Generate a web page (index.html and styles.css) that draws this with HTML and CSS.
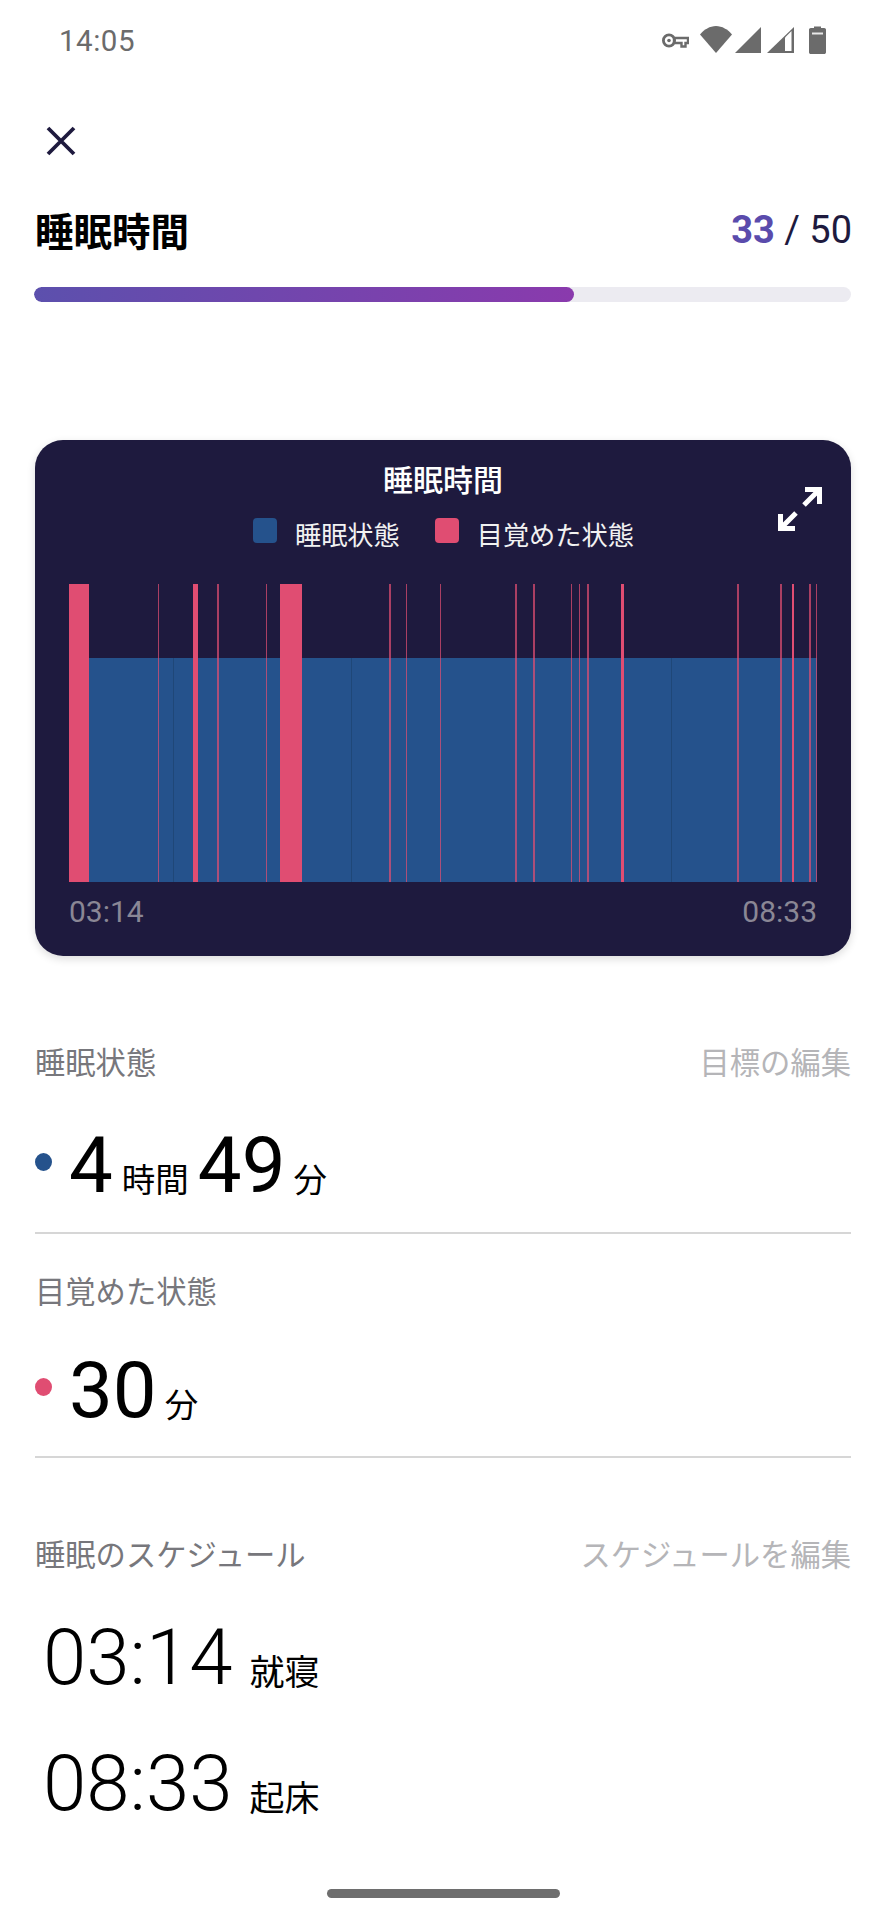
FILE: index.html
```html
<!DOCTYPE html>
<html lang="ja">
<head>
<meta charset="utf-8">
<title>睡眠時間</title>
<link rel="stylesheet" href="styles.css">
</head>
<body>
<div class="screen">
  <div class="statusbar">
    <span class="clock">14:05</span>
    <div class="status-icons">
      <svg class="ic-key" viewBox="0 0 27 15"><circle cx="7" cy="7.500" r="5.600" fill="none" stroke="#6b6b6b" stroke-width="2.800"/><circle cx="7" cy="7.500" r="1.800" fill="#6b6b6b"/><path d="M12 5h14v5h-2.500v3.500h-4V10h-7.500z" fill="none" stroke="#6b6b6b" stroke-width="2.400"/></svg>
      <svg class="ic-wifi" viewBox="0 0 32 27"><path d="M0 8.500C4 3.500 10 0 16 0s12 3.500 16 8.500L16 27z" fill="#6b6b6b"/></svg>
      <svg class="ic-signal" viewBox="0 0 26 26"><path d="M0 26L26 0v26z" fill="#6b6b6b"/></svg>
      <svg class="ic-signal2" viewBox="0 0 27 26"><path d="M0 26L27 0v26z" fill="#6b6b6b"/><path d="M18 10.500l6.500-6.500V24H18z" fill="#fff"/></svg>
      <svg class="ic-batt" viewBox="0 0 17 28"><path d="M5 2V0.500h7V2h3.200c1 0 1.800.8 1.800 1.800v22.400c0 1-.8 1.800-1.800 1.800H1.800c-1 0-1.800-.8-1.800-1.800V3.800C0 2.800.8 2 1.800 2z" fill="#6b6b6b"/><path d="M3 6.500h11v2H3z" fill="#e8e8e8"/></svg>
    </div>
  </div>

  <div class="main">
    <svg class="close" viewBox="0 0 30 30"><path d="M2 2l26 26M28 2L2 28" fill="none" stroke="#1e1a3e" stroke-width="3.800"/></svg>

    <div class="title-row">
      <h1 class="title">睡眠時間</h1>
      <div class="score"><b class="score-val">33</b> / 50</div>
    </div>
    <div class="progress"><div class="progress-fill"></div></div>

    <section class="card">
      <h2 class="card-title">睡眠時間</h2>
      <svg class="expand" viewBox="0 0 44 44"><path d="M27 2.500h14.500V17M41 3L26 18M17 41.500H2.500V27M3 41l15-15" fill="none" stroke="#fff" stroke-width="5"/></svg>
      <div class="legend">
        <span class="swatch swatch-blue"></span><span class="legend-text">睡眠状態</span>
        <span class="swatch swatch-red"></span><span class="legend-text">目覚めた状態</span>
      </div>
      <svg class="chart" viewBox="0 0 748 298" shape-rendering="crispEdges">
        <rect x="20" y="74" width="728" height="224" fill="#25528c"/>
        <g fill="#1f4778">
          <rect x="104" y="74" width="1" height="224"/>
          <rect x="282" y="74" width="1" height="224"/>
          <rect x="602" y="74" width="1" height="224"/>
        </g>
        <g fill="#e04d72">
          <rect x="0" y="0" width="20" height="298"/>
          <rect x="124" y="0" width="5" height="298"/>
          <rect x="211" y="0" width="22" height="298"/>
          <rect x="552" y="0" width="3" height="298"/>
          <rect x="723" y="0" width="2" height="298"/>
        </g>
        <g fill="#e04d72" fill-opacity="0.72">
          <rect x="89" y="0" width="1" height="298"/>
          <rect x="148" y="0" width="2" height="298"/>
          <rect x="197" y="0" width="1" height="298"/>
          <rect x="320" y="0" width="2" height="298"/>
          <rect x="337" y="0" width="1" height="298"/>
          <rect x="371" y="0" width="1" height="298"/>
          <rect x="446" y="0" width="2" height="298"/>
          <rect x="464" y="0" width="2" height="298"/>
          <rect x="502" y="0" width="1" height="298"/>
          <rect x="510" y="0" width="1" height="298"/>
          <rect x="518" y="0" width="2" height="298"/>
          <rect x="668" y="0" width="2" height="298"/>
          <rect x="711" y="0" width="2" height="298"/>
          <rect x="740" y="0" width="2" height="298"/>
          <rect x="747" y="0" width="1" height="298"/>
        </g>
      </svg>
      <div class="axis"><span>03:14</span><span>08:33</span></div>
    </section>

    <div class="section-head sleep-head">
      <span class="section-label">睡眠状態</span>
      <span class="section-link">目標の編集</span>
    </div>
    <div class="value-row first-row">
      <span class="dot dot-blue"></span>
      <span class="num">4</span><span class="unit unit-a">時間</span><span class="num num-b">49</span><span class="unit unit-b">分</span>
    </div>
    <div class="divider divider-a"></div>

    <div class="section-head wake-head">
      <span class="section-label wake-label">目覚めた状態</span>
    </div>
    <div class="value-row second-row">
      <span class="dot dot-red"></span>
      <span class="num">30</span><span class="unit unit-b">分</span>
    </div>
    <div class="divider divider-b"></div>

    <div class="section-head sched-head">
      <span class="section-label">睡眠のスケジュール</span>
      <span class="section-link">スケジュールを編集</span>
    </div>
    <div class="time-row bed-row"><span class="time">03:14</span><span class="unit time-unit">就寝</span></div>
    <div class="time-row wake-row"><span class="time">08:33</span><span class="unit time-unit">起床</span></div>
  </div>

  <div class="home-bar"></div>
</div>
</body>
</html>
```

FILE: styles.css
```css
* { box-sizing: border-box; }
html, body { margin: 0; padding: 0; background: #fff; }
body { font-family: "Noto Sans CJK JP", Roboto, sans-serif; }
.screen { width: 886px; height: 1920px; overflow: hidden; display: flex; flex-direction: column; }

.statusbar { height: 80px; padding: 26px 60px 0 59px; display: flex; justify-content: space-between; align-items: flex-start; }
.clock { font-family: Roboto, sans-serif; font-size: 29.500px; letter-spacing: .5px; line-height: 30px; color: #6b6b6b; }
.status-icons { display: flex; align-items: flex-start; }
.ic-key { width: 27px; height: 15px; margin-top: 7px; }
.ic-wifi { width: 32px; height: 27px; margin-left: 11px; }
.ic-signal { width: 26px; height: 26px; margin-left: 3px; margin-top: 1px; }
.ic-signal2 { width: 27px; height: 26px; margin-left: 6px; margin-top: 1px; }
.ic-batt { width: 17px; height: 28px; margin-left: 15px; }

.main { padding: 0 35px 0 35px; display: flex; flex-direction: column; }
.close { width: 30px; height: 30px; margin: 46px 0 0 11px; display: block; }

.title-row { margin-top: 51px; height: 48px; display: flex; justify-content: space-between; align-items: flex-start; }
.title { margin: 0; font-size: 38.500px; line-height: 44px; font-weight: 700; color: #000; }
.score { font-family: Roboto, sans-serif; font-size: 38px; line-height: 48px; color: #1e1a3e; margin-right: -1px; margin-top: -1px; }
.score-val { font-weight: 700; color: #5a4bac; }

.progress { margin-top: 32px; height: 15px; border-radius: 8px; background: #ecebf1; overflow: hidden; margin-left: -1px; }
.progress-fill { width: 540px; height: 15px; border-radius: 8px; background: linear-gradient(90deg, #5c50ad 0%, #8a3aad 100%); }

.card { position: relative; margin-top: 138px; height: 516px; padding: 18px 34px 0; border-radius: 28px; background: #1e1a3e; box-shadow: 0 3px 8px rgba(0,0,0,.14); }
.card-title { margin: 0; font-size: 30px; line-height: 40px; font-weight: 500; color: #fff; text-align: center; }
.expand { position: absolute; top: 47px; right: 29px; width: 44px; height: 44px; }
.legend { margin-top: 18px; height: 40px; display: flex; align-items: flex-start; padding-left: 184px; }
.swatch { width: 24px; height: 25px; border-radius: 4px; margin-top: 2px; flex: none; }
.swatch-blue { background: #25528c; }
.swatch-red { background: #e04d72; margin-left: 35px; }
.legend-text { font-size: 26.200px; line-height: 38px; margin: -1px 0 0 18px; color: #f2f2f2; }
.chart { display: block; width: 748px; height: 298px; margin-top: 28px; }
.axis { margin-top: 12px; display: flex; justify-content: space-between; font-family: Roboto, sans-serif; font-size: 30px; line-height: 36px; color: #8a8795; }

.section-head { display: flex; justify-content: space-between; height: 40px; font-size: 30.300px; line-height: 36px; }
.section-label { color: #77777c; }
.section-link { color: #b5b5b8; }
.sleep-head { margin-top: 87px; }
.wake-head { margin-top: 38px; }
.sched-head { margin-top: 77px; }

.value-row, .time-row { display: flex; align-items: baseline; height: 90px; line-height: 90px; }
.first-row { margin-top: 38px; }
.second-row { margin-top: 34px; }
.bed-row { margin-top: 38px; }
.wake-row { margin-top: 36px; }
.dot { width: 17px; height: 18px; border-radius: 50%; align-self: flex-start; margin-top: 32px; margin-right: 17px; flex: none; }
.dot-blue { background: #25528c; }
.dot-red { background: #e04d72; }
.num { font-family: Roboto, sans-serif; font-size: 78px; color: #000; }
.num-b { margin-left: 9px; }
.unit { font-size: 33.500px; color: #000; }
.unit-a { margin-left: 9px; }
.unit-b { margin-left: 8px; }
.divider { height: 2px; background: #d6d6d6; }
.divider-a { margin-top: 21px; }
.divider-b { margin-top: 20px; }
.time-row { padding-left: 8px; }
.time { font-family: Roboto, sans-serif; font-size: 78px; font-weight: 300; color: #000; }
.time-unit { margin-left: 17px; font-size: 35px; transform: translateY(1px); }

.home-bar { width: 233px; height: 9px; border-radius: 5px; background: #6e6e6e; position: absolute; left: 327px; top: 1889px; }
```
